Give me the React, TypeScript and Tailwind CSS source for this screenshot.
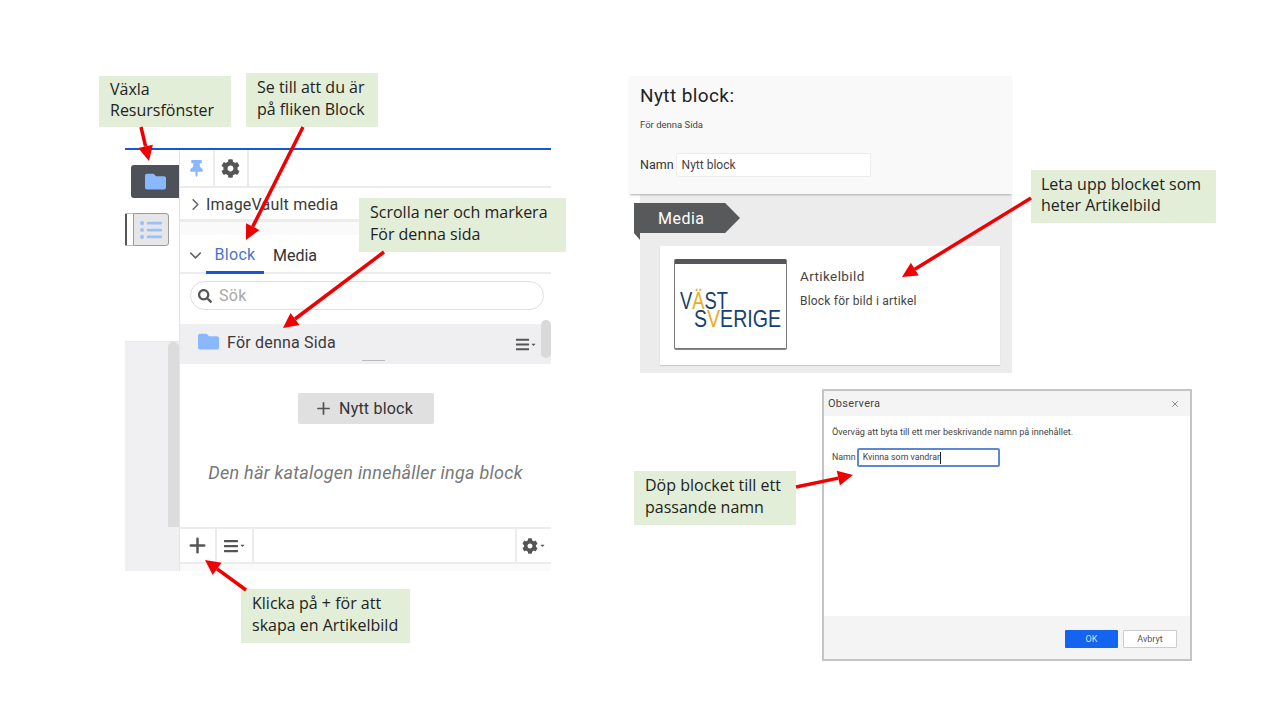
import { ChevronDown, ChevronRight, Plus, X } from "lucide-react";
import { FaBars, FaCaretDown, FaCog, FaFolder, FaListUl, FaSearch, FaThumbtack } from "react-icons/fa";

const ui = "font-['Roboto',sans-serif]";

function Note({ className, lines }: { className: string; lines: string[] }) {
  return (
    <div className={`absolute flex flex-col justify-center bg-[#e2eed8] pb-[3px] pl-[11px] font-['Open_Sans',sans-serif] text-[16px] leading-[21.5px] text-[#222] ${className}`}>
      {lines.map(line => <div key={line} className="whitespace-nowrap">{line}</div>)}
    </div>
  );
}

function Arrow({ x1, y1, x2, y2 }: { x1: number; y1: number; x2: number; y2: number }) {
  const a = Math.atan2(y2 - y1, x2 - x1);
  const bx = x2 - Math.cos(a) * 15;
  const by = y2 - Math.sin(a) * 15;
  const px = -Math.sin(a) * 7.5;
  const py = Math.cos(a) * 7.5;
  return (
    <g>
      <line x1={x1} y1={y1} x2={bx} y2={by} stroke="#f00000" strokeWidth={3.5} />
      <polygon points={`${x2},${y2} ${bx + px},${by + py} ${bx - px},${by - py}`} fill="#f00000" />
    </g>
  );
}

function MenuCaret({ size = 15 }: { size?: number }) {
  return (
    <span className="flex items-center text-[#555]">
      <FaBars size={size} />
      <FaCaretDown size={7} />
    </span>
  );
}

function ResourcePanel() {
  return (
    <div className={`absolute left-[125px] top-[148px] flex h-[423px] w-[426px] flex-col ${ui}`}>
      <div className="h-[2px] shrink-0 bg-[#1557d6]" />
      <div className="flex min-h-0 grow">
        {/* left strip */}
        <div className="flex w-[55px] shrink-0 flex-col border-r border-[#e4e4e4]">
          <div className="h-[192px] shrink-0 border-b border-[#e6e6e6] bg-white pt-[15px]">
            <div className="ml-[6px] flex h-[33px] w-[48px] items-center justify-center rounded-l-[3px] bg-[#4e5157] text-[#8ab8ff]">
              <FaFolder size={21} />
            </div>
            <div className="mt-[15px] flex items-center">
              <div className="h-[33px] w-[8px] border-y border-[#bbb]">
                <div className="h-full w-[2px] bg-[#555]" />
              </div>
              <div className="flex h-[33px] w-[36px] items-center justify-center rounded-r-[3px] border border-[#9b9b9b] bg-[#e6e6e8] text-[#9cc2f5]">
                <FaListUl size={22} />
              </div>
            </div>
          </div>
          <div className="flex grow justify-end bg-[#f0f0f2]">
            <div className="h-[185px] w-[11px] rounded-t-[5px] bg-[#dcdcdc]" />
          </div>
        </div>

        {/* main column */}
        <div className="flex min-w-0 grow flex-col bg-white">
          <div className="flex h-[38px] shrink-0 border-b-2 border-[#ececec]">
            <div className="flex w-[35px] items-center justify-center border-r-2 border-[#ececec] text-[#8ab8ff]">
              <FaThumbtack size={17} />
            </div>
            <div className="flex w-[34px] items-center justify-center border-r-2 border-[#ececec] pr-[2px] text-[#555]">
              <FaCog size={19} />
            </div>
          </div>
          <div className="flex h-[34px] shrink-0 items-center border-b-[3px] border-[#ececec] pl-[6px] pt-[2px] text-[16px] text-[#3a3a3a]">
            <ChevronRight size={19} strokeWidth={2} className="mr-[1px] text-[#666]" />
            <span className="tracking-[0.2px]">ImageVault media</span>
          </div>
          <div className="h-[13px] shrink-0 bg-[#fafafa]" />
          <div className="flex h-[39px] shrink-0 border-b-2 border-[#ececec] text-[16px]">
            <div className="flex w-[26px] items-center justify-center pt-[4px]">
              <ChevronDown size={19} strokeWidth={2} className="ml-[4px] text-[#666]" />
            </div>
            <div className="-mb-[2px] flex w-[58px] items-center justify-center border-b-[3px] border-[#1557d6] pt-[4px] tracking-[0.3px] text-[#4a73d1]">Block</div>
            <div className="flex items-center pl-[9px] pt-[4px] text-[#333]">Media</div>
          </div>
          <div className="flex h-[50px] shrink-0 items-start pl-[10px] pr-[7px] pt-[7px]">
            <div className="flex h-[29px] w-full items-center gap-[7px] rounded-full border border-[#dedede] pl-[7px] pt-[1px] text-[16px] text-[#a8a8a8]">
              <FaSearch size={14} className="text-[#555]" />
              <span className="tracking-[0.3px]">Sök</span>
            </div>
          </div>
          <div className="relative flex h-[40px] shrink-0 items-center bg-[#efeff1] pl-[18px] text-[16px] text-[#3a3a3a]">
            <FaFolder size={21} className="mb-[5px] text-[#8ab8ff]" />
            <span className="mb-[2px] ml-[8px] tracking-[0.2px]">För denna Sida</span>
            <span className="ml-auto mr-[14px]"><MenuCaret /></span>
            <div className="absolute right-0 top-[-4px] h-[38px] w-[10px] rounded-[5px] bg-[#d9d9d9]" />
            <div className="absolute bottom-[3px] left-[182px] h-[1px] w-[23px] bg-[#bbb]" />
          </div>
          <div className="flex min-h-0 grow flex-col items-center">
            <div className="mt-[29px] flex h-[31px] w-[136px] items-center justify-center gap-[6px] rounded-[2px] bg-[#e0e0e0] pr-[4px] text-[16px] text-[#333]">
              <Plus size={19} strokeWidth={2.2} className="text-[#555]" />
              <span className="tracking-[0.2px]">Nytt block</span>
            </div>
            <div className="mt-[37px] text-[18px] italic leading-[24px] tracking-[0.25px] text-[#777]">Den här katalogen innehåller inga block</div>
          </div>
          <div className="flex h-[37px] shrink-0 border-y-2 border-[#ececec]">
            <div className="flex w-[37px] items-center justify-center border-r-2 border-[#ececec] text-[#555]">
              <Plus size={23} strokeWidth={2.6} />
            </div>
            <div className="flex w-[37px] items-center justify-center border-r-2 border-[#ececec]"><MenuCaret size={16} /></div>
            <div className="ml-auto flex w-[36px] items-center justify-center gap-[1px] border-l-2 border-[#ececec] text-[#555]">
              <FaCog size={16} />
              <FaCaretDown size={7} />
            </div>
          </div>
          <div className="h-[7px] shrink-0 bg-[#fafafa]" />
        </div>
      </div>
    </div>
  );
}

function Logo() {
  return (
    <svg viewBox="0 0 111 74" className="h-[74px] w-[111px]">
      <text x="5" y="45" fontFamily="Liberation Sans, sans-serif" fontSize="24" fill="#17406f" textLength="48" lengthAdjust="spacingAndGlyphs">
        V<tspan fill="#e9ac1f">Ä</tspan>ST
      </text>
      <text x="19" y="63" fontFamily="Liberation Sans, sans-serif" fontSize="24" fill="#17406f" textLength="87" lengthAdjust="spacingAndGlyphs">
        S<tspan fill="#e9ac1f">V</tspan>ERIGE
      </text>
    </svg>
  );
}

function BlockPanel() {
  return (
    <div className={`absolute left-[629px] top-[76px] flex h-[297px] w-[383px] flex-col ${ui}`}>
      <div className="relative z-10 h-[118px] shrink-0 bg-[#f9f9f9] pl-[11px] pt-[8px] shadow-[0_2px_2px_-1px_#aaa]">
        <div className="text-[19px] leading-[24px] tracking-[0.4px] text-[#222]">Nytt block:</div>
        <div className="mt-[10px] text-[9.5px] leading-[14px] text-[#444]">För denna Sida</div>
        <div className="mt-[21px] flex items-center gap-[2px]">
          <span className="text-[12.5px] text-[#333]">Namn</span>
          <div className="flex h-[24px] w-[195px] items-center rounded-[2px] border border-[#ececec] bg-white pl-[5px] text-[12px] text-[#444]">Nytt block</div>
        </div>
      </div>
      <div className="relative ml-[11px] grow bg-[#ececec] pl-[20px] pt-[52px]">
        <div className="absolute -left-[6px] top-[9px] flex h-[30px] w-[106px] items-center bg-[#58595b] pl-[24px] pt-[2px] text-[16px] tracking-[0.5px] text-white [clip-path:polygon(0_0,86%_0,100%_50%,86%_100%,0_100%)]">Media</div>
        <div className="absolute -left-[6px] top-[39px] h-[7px] w-[6px] bg-[#58595b] [clip-path:polygon(0_0,100%_0,100%_100%)]" />
        <div className="flex h-[119px] w-[340px] items-start bg-white pl-[14px] pt-[13px] shadow-[0_1px_1px_#ccc]">
          <div className="h-[90px] w-[113px] shrink-0 overflow-hidden rounded-[2px] border border-[#777] border-t-[5px] border-t-[#55565c] bg-white shadow-[0_1px_0_#888]">
            <Logo />
          </div>
          <div className="ml-[13px]">
            <div className="mt-[8px] text-[13.5px] leading-[18px] tracking-[0.4px] text-[#444]">Artikelbild</div>
            <div className="mt-[8px] text-[12px] leading-[16px] tracking-[0.2px] text-[#444]">Block för bild i artikel</div>
          </div>
        </div>
      </div>
    </div>
  );
}

function Dialog() {
  return (
    <div className={`absolute left-[822px] top-[389px] flex h-[272px] w-[370px] flex-col border-2 border-[#c4c4c4] bg-white ${ui}`}>
      <div className="flex h-[25px] shrink-0 items-center justify-between bg-[#f4f4f4] pl-[4px] pr-[10px] pt-[1px] text-[11px] tracking-[0.3px] text-[#444]">
        <span>Observera</span>
        <X size={10} strokeWidth={2} className="text-[#777]" />
      </div>
      <div className="grow pl-[8px] pt-[10px] text-[9.1px] text-[#444]">
        <div className="leading-[13px]">Överväg att byta till ett mer beskrivande namn på innehållet.</div>
        <div className="mt-[9px] flex items-center gap-[1px] text-[8.8px]">
          <span>Namn</span>
          <div className="flex h-[19px] w-[143px] items-center rounded-[2px] border-2 border-[#5f87cf] pl-[4px] text-[#444]">
            <span>Kvinna som vandrar</span>
            <span className="h-[12px] w-[1px] bg-[#222]" />
          </div>
        </div>
      </div>
      <div className="flex h-[43px] shrink-0 items-start justify-end gap-[5px] bg-[#f4f4f4] pr-[13px] pt-[14px] text-[9px]">
        <div className="flex h-[18px] w-[53px] items-center justify-center rounded-[1px] bg-[#1464f0] pt-[1px] text-[#cfe0ff]">OK</div>
        <div className="flex h-[18px] w-[54px] items-center justify-center rounded-[1px] border border-[#ccc] bg-white pt-[1px] text-[#555]">Avbryt</div>
      </div>
    </div>
  );
}

export default function App() {
  return (
    <div className="relative h-[718px] w-[1277px] overflow-hidden bg-white">
      <ResourcePanel />
      <BlockPanel />
      <Dialog />

      <Note className="left-[99px] top-[76px] h-[51px] w-[132px]" lines={["Växla", "Resursfönster"]} />
      <Note className="left-[246px] top-[73px] h-[54px] w-[132px]" lines={["Se till att du är", "på fliken Block"]} />
      <Note className="left-[359px] top-[198px] h-[54px] w-[207px]" lines={["Scrolla ner och markera", "För denna sida"]} />
      <Note className="left-[241px] top-[589px] h-[54px] w-[169px]" lines={["Klicka på + för att", "skapa en Artikelbild"]} />
      <Note className="left-[1031px] top-[170px] h-[53px] w-[185px] !pl-[10px]" lines={["Leta upp blocket som", "heter Artikelbild"]} />
      <Note className="left-[634px] top-[471px] h-[54px] w-[162px]" lines={["Döp blocket till ett", "passande namn"]} />

      <svg className="pointer-events-none absolute left-0 top-0" width={1277} height={718}>
        <Arrow x1={141} y1={127} x2={149} y2={161} />
        <Arrow x1={303} y1={127} x2={246} y2={240} />
        <Arrow x1={384} y1={252} x2={283} y2={328} />
        <Arrow x1={246} y1={590} x2={205} y2={560} />
        <Arrow x1={1031} y1={198} x2={902} y2={277} />
        <Arrow x1={796} y1={487} x2={853} y2={475} />
      </svg>
    </div>
  );
}
